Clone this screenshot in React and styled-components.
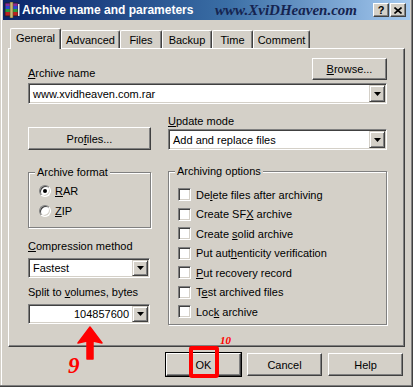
import React from "react";
import styled, { createGlobalStyle } from "styled-components";

const GlobalStyle = createGlobalStyle`
  html, body {
    margin: 0;
    padding: 0;
    background: #d4d0c8;
  }
  body {
    font-family: "Liberation Sans", Arial, sans-serif;
    font-size: 11px;
    color: #000;
  }
`;

const Window = styled.div`
  position: relative;
  box-sizing: border-box;
  width: 413px;
  height: 387px;
  padding: 0 3px 3px 3px;
  background: #d4d0c8;
  display: flex;
  flex-direction: column;
  box-shadow: inset -1px -1px #404040, inset -2px -2px #808080,
    inset 1px 0 #d4d0c8, inset 2px 0 #fff;
`;

const TitleBar = styled.div`
  height: 20px;
  display: flex;
  align-items: center;
  padding: 0 4px 0 1px;
  background: linear-gradient(to right, #0a246a 0%, #3a6ea5 55%, #a6caf0 100%);
`;

const Title = styled.span`
  margin-left: 2px;
  color: #fff;
  font-weight: bold;
  font-size: 12px;
  white-space: nowrap;
`;

const Brand = styled.span`
  margin-left: auto;
  margin-right: 16px;
  font-family: "Liberation Serif", "Times New Roman", serif;
  font-style: italic;
  font-weight: bold;
  font-size: 15px;
  color: #15234f;
  white-space: nowrap;
`;

const CaptionButtons = styled.div`
  display: flex;
  gap: 1px;
`;

const CaptionButton = styled.div`
  box-sizing: border-box;
  width: 16px;
  height: 14px;
  background: #d4d0c8;
  border: 1px solid;
  border-color: #fff #404040 #404040 #fff;
  box-shadow: inset -1px -1px #808080;
  display: flex;
  align-items: center;
  justify-content: center;
  font-weight: bold;
  font-size: 11px;
  line-height: 1;
`;

const Body = styled.div`
  flex: 1;
  display: flex;
  flex-direction: column;
  padding: 8px 5px 0 5px;
`;

const TabStrip = styled.div`
  display: flex;
  align-items: flex-end;
  height: 21px;
  padding-left: 2px;
  margin-bottom: -1px;
  position: relative;
  z-index: 1;
`;

const Tab = styled.div`
  box-sizing: border-box;
  width: ${(p) => p.$w}px;
  height: ${(p) => (p.$active ? 21 : 18)}px;
  display: flex;
  align-items: center;
  justify-content: center;
  padding-bottom: ${(p) => (p.$active ? 2 : 0)}px;
  background: #d4d0c8;
  border-top: 1px solid #fff;
  border-left: 1px solid #fff;
  border-right: 1px solid #404040;
  box-shadow: inset -1px 0 #808080;
  border-radius: 2px 2px 0 0;
  margin-bottom: ${(p) => (p.$active ? 0 : 1)}px;
`;

const Panel = styled.div`
  box-sizing: border-box;
  height: 299px;
  padding: 9px 17px 0 19px;
  border: 1px solid;
  border-color: #fff #404040 #404040 #fff;
  box-shadow: inset -1px -1px #808080;
  display: flex;
  flex-direction: column;
`;

const NameRow = styled.div`
  display: flex;
  justify-content: space-between;
  align-items: flex-end;
`;

const Label = styled.div`
  line-height: 13px;
  white-space: nowrap;
  margin-top: ${(p) => p.$mt || 0}px;
`;

const Button = styled.div`
  box-sizing: border-box;
  width: ${(p) => p.$w || 75}px;
  height: ${(p) => p.$h || 23}px;
  margin-top: ${(p) => p.$mt || 0}px;
  display: flex;
  align-items: center;
  justify-content: center;
  background: #d4d0c8;
  border: 1px solid;
  border-color: #fff #404040 #404040 #fff;
  box-shadow: inset -1px -1px #808080;
  outline: ${(p) => (p.$default ? "1px solid #000" : "none")};
  outline-offset: 0;
  ${(p) =>
    p.$default &&
    `border-color: #fff #404040 #404040 #fff; box-shadow: inset -1px -1px #808080, 0 0 0 1px #000;`}
`;

const ComboBox = styled.div`
  box-sizing: border-box;
  width: ${(p) => p.$w}px;
  height: ${(p) => p.$h || 21}px;
  margin-top: ${(p) => p.$mt || 0}px;
  display: flex;
  background: #fff;
  border: 1px solid;
  border-color: #808080 #fff #fff #808080;
  box-shadow: inset 1px 1px #404040, inset -1px -1px #d4d0c8;
  padding: 1px;
`;

const ComboText = styled.div`
  flex: 1;
  display: flex;
  align-items: center;
  justify-content: ${(p) => (p.$right ? "flex-end" : "flex-start")};
  padding: 0 3px;
  white-space: nowrap;
  overflow: hidden;
`;

const DropButton = styled.div`
  box-sizing: border-box;
  width: 16px;
  display: flex;
  align-items: center;
  justify-content: center;
  background: #d4d0c8;
  border: 1px solid;
  border-color: #d4d0c8 #404040 #404040 #d4d0c8;
  box-shadow: inset 1px 1px #fff, inset -1px -1px #808080;
`;

const Columns = styled.div`
  display: flex;
  justify-content: space-between;
  margin-top: 11px;
`;

const Column = styled.div`
  width: ${(p) => p.$w}px;
  display: flex;
  flex-direction: column;
`;

const Group = styled.div`
  position: relative;
  box-sizing: border-box;
  height: ${(p) => p.$h}px;
  margin-top: ${(p) => p.$mt || 0}px;
  padding: ${(p) => p.$pad};
  border: 1px solid #808080;
  box-shadow: inset 1px 1px #fff, 1px 1px #fff;
  display: flex;
  flex-direction: column;
`;

const GroupTitle = styled.span`
  position: absolute;
  top: -7px;
  left: 6px;
  padding: 0 2px;
  line-height: 13px;
  background: #d4d0c8;
  white-space: nowrap;
`;

const OptionRow = styled.div`
  display: flex;
  align-items: center;
  gap: ${(p) => p.$gap}px;
  height: ${(p) => p.$h}px;
  white-space: nowrap;
`;

const Radio = styled.span`
  position: relative;
  box-sizing: border-box;
  width: 12px;
  height: 12px;
  border-radius: 50%;
  background: #fff;
  border: 1px solid;
  border-color: #808080 #fff #fff #808080;
  box-shadow: inset 1px 1px #404040, inset -1px -1px #d4d0c8;
  &::after {
    content: "";
    display: ${(p) => (p.$checked ? "block" : "none")};
    position: absolute;
    left: 3px;
    top: 3px;
    width: 4px;
    height: 4px;
    border-radius: 50%;
    background: #000;
  }
`;

const Check = styled.span`
  box-sizing: border-box;
  width: 13px;
  height: 13px;
  background: #fff;
  border: 1px solid;
  border-color: #808080 #fff #fff #808080;
  box-shadow: inset 1px 1px #404040, inset -1px -1px #d4d0c8;
`;

const ButtonRow = styled.div`
  display: flex;
  justify-content: flex-end;
  gap: 6px;
  margin-top: 6px;
  padding-right: 2px;
`;

const RedFrame = styled.div`
  position: absolute;
  left: 189px;
  top: 346px;
  width: 30px;
  height: 32px;
  box-sizing: border-box;
  border: 4px solid #f00;
  border-radius: 3px;
`;

const Note = styled.span`
  position: absolute;
  left: ${(p) => p.$x}px;
  top: ${(p) => p.$y}px;
  font-family: "Liberation Serif", "Times New Roman", serif;
  font-style: italic;
  font-weight: bold;
  font-size: ${(p) => p.$size}px;
  line-height: 1;
  color: #f00;
`;

const ArrowMark = styled.svg`
  position: absolute;
  left: 76px;
  top: 326px;
`;

const U = styled.span`
  text-decoration: underline;
`;

function AppIcon() {
  return (
    <svg width="16" height="16" viewBox="0 0 16 16">
      <rect x="1" y="1" width="13" height="3" fill="#8a2a9a" />
      <rect x="1" y="4" width="13" height="3" fill="#2a4ad0" />
      <rect x="1" y="7" width="13" height="3" fill="#2a9a3a" />
      <rect x="1" y="10" width="13" height="4" fill="#c02020" />
      <rect x="1" y="1" width="13" height="13" fill="none" stroke="#202020" strokeWidth="0.8" />
      <rect x="6" y="0" width="3" height="16" fill="#c8b878" stroke="#5a4a20" strokeWidth="0.6" />
      <rect x="14" y="2" width="1.5" height="12" fill="#e8e8e8" />
    </svg>
  );
}

function Arrow() {
  return (
    <svg width="7" height="4" viewBox="0 0 7 4">
      <polygon points="0,0 7,0 3.5,4" fill="#000" />
    </svg>
  );
}

function Combo({ w, h, mt, right, children }) {
  return (
    <ComboBox $w={w} $h={h} $mt={mt}>
      <ComboText $right={right}>{children}</ComboText>
      <DropButton>
        <Arrow />
      </DropButton>
    </ComboBox>
  );
}

const tabs = [
  ["General", 51],
  ["Advanced", 59],
  ["Files", 42],
  ["Backup", 50],
  ["Time", 41],
  ["Comment", 57],
];

const options = [
  <>De<U>l</U>ete files after archiving</>,
  <>Create SF<U>X</U> archive</>,
  <>Create <U>s</U>olid archive</>,
  <>Put aut<U>h</U>enticity verification</>,
  <><U>P</U>ut recovery record</>,
  <>T<U>e</U>st archived files</>,
  <>Loc<U>k</U> archive</>,
];

export default function App() {
  return (
    <>
      <GlobalStyle />
      <Window>
        <TitleBar>
          <AppIcon />
          <Title>Archive name and parameters</Title>
          <Brand>www.XviDHeaven.com</Brand>
          <CaptionButtons>
            <CaptionButton>?</CaptionButton>
            <CaptionButton>
              <svg width="8" height="7" viewBox="0 0 8 7">
                <path d="M0.5 0.5 L7.5 6.5 M7.5 0.5 L0.5 6.5" stroke="#000" strokeWidth="1.6" />
              </svg>
            </CaptionButton>
          </CaptionButtons>
        </TitleBar>

        <Body>
          <TabStrip>
            {tabs.map(([name, w], i) => (
              <Tab key={name} $w={w} $active={i === 0}>
                {name}
              </Tab>
            ))}
          </TabStrip>

          <Panel>
            <NameRow>
              <Label>
                <U>A</U>rchive name
              </Label>
              <Button $w={75} $h={22}>
                <span>
                  <U>B</U>rowse...
                </span>
              </Button>
            </NameRow>
            <Combo w={359} mt={3}>
              www.xvidheaven.com.rar
            </Combo>

            <Columns>
              <Column $w={123}>
                <Button $w={123} $mt={12}>
                  <span>
                    Pro<U>f</U>iles...
                  </span>
                </Button>
                <Group $w={122} $h={56} $mt={22} $pad="8px 0 0 10px">
                  <GroupTitle>Archive format</GroupTitle>
                  <OptionRow $h={20} $gap={4}>
                    <Radio $checked />
                    <span>
                      <U>R</U>AR
                    </span>
                  </OptionRow>
                  <OptionRow $h={20} $gap={4}>
                    <Radio />
                    <span>
                      <U>Z</U>IP
                    </span>
                  </OptionRow>
                </Group>
                <Label $mt={12}>
                  <U>C</U>ompression method
                </Label>
                <Combo w={122} mt={5} h={20}>
                  Fastest
                </Combo>
                <Label $mt={8}>
                  Split to <U>v</U>olumes, bytes
                </Label>
                <Combo w={122} mt={5} h={20} right>
                  104857600
                </Combo>
              </Column>

              <Column $w={219}>
                <Label>
                  <U>U</U>pdate mode
                </Label>
                <Combo w={219} mt={1}>
                  Add and replace files
                </Combo>
                <Group $h={154} $mt={21} $pad="13px 0 0 9px">
                  <GroupTitle>Archiving options</GroupTitle>
                  {options.map((text, i) => (
                    <OptionRow key={i} $h={19.5} $gap={5}>
                      <Check />
                      <span>{text}</span>
                    </OptionRow>
                  ))}
                </Group>
              </Column>
            </Columns>
          </Panel>

          <ButtonRow>
            <Button $default>OK</Button>
            <Button>Cancel</Button>
            <Button>Help</Button>
          </ButtonRow>
        </Body>

        <ArrowMark width="28" height="34" viewBox="0 0 28 34">
          <path d="M14 1 L26 17 L17 15 L17 33 L11 33 L11 15 L2 17 Z" fill="#f00" strokeLinejoin="round" stroke="#f00" strokeWidth="1.5" />
        </ArrowMark>
        <Note $x={68} $y={354} $size={23}>
          9
        </Note>
        <Note $x={220} $y={335} $size={11}>
          10
        </Note>
        <RedFrame />
      </Window>
    </>
  );
}
